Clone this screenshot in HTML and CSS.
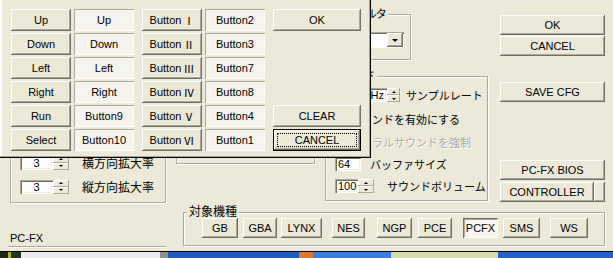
FILE: index.html
```html
<!DOCTYPE html>
<html lang="ja">
<head>
    <meta charset="UTF-8">
    <title>PC-FX 設定</title>
    <link rel="stylesheet" href="styles.css">
</head>
<body>
    <div class="screen">
        <div class="main">
            <div class="upper">
                <div class="col-a">
                    <fieldset class="group mag">
                        <div class="rows">
                            <div class="spin-row">
                                <span class="edit num">3</span>
                                <span class="spin"><i class="up"></i><i class="down"></i></span>
                                <span class="jp label">横方向拡大率</span>
                            </div>
                            <div class="spin-row">
                                <span class="edit num">3</span>
                                <span class="spin"><i class="up"></i><i class="down"></i></span>
                                <span class="jp label">縦方向拡大率</span>
                            </div>
                        </div>
                    </fieldset>
                </div>

                <div class="col-b">
                    <div class="panel"></div>
                </div>

                <div class="col-c">
                    <fieldset class="group filter">
                        <legend>フィルタ</legend>
                        <div class="combo"><span class="combo-text"></span><span class="drop"><b></b></span></div>
                    </fieldset>
                    <fieldset class="group sound">
                        <legend>サウンド</legend>
                        <div class="srow r1">
                            <span class="edit hz">44100Hz</span>
                            <span class="spin"><i class="up"></i><i class="down"></i></span>
                            <span class="label">サンプルレート</span>
                        </div>
                        <div class="srow r2">
                            <span class="check"></span>
                            <span class="label">サウンドを有効にする</span>
                        </div>
                        <div class="srow r3">
                            <span class="check"></span>
                            <span class="label disabled">モノラルサウンドを強制</span>
                        </div>
                        <div class="srow r4">
                            <span class="edit buf">64</span>
                            <span class="label">バッファサイズ</span>
                        </div>
                        <div class="srow r5">
                            <span class="edit vol">100</span>
                            <span class="spin"><i class="up"></i><i class="down"></i></span>
                            <span class="label">サウンドボリューム</span>
                        </div>
                    </fieldset>
                </div>

                <div class="col-d">
                    <button class="btn ok">OK</button>
                    <button class="btn cancel">CANCEL</button>
                    <button class="btn save">SAVE CFG</button>
                    <button class="btn bios">PC-FX BIOS</button>
                    <div class="ctrl-row">
                        <button class="btn ctrl">CONTROLLER</button>
                        <button class="btn ctrl-more"></button>
                    </div>
                </div>
            </div>

            <div class="lower">
                <div class="status">
                    <span>PC-FX</span>
                    <div class="etched"></div>
                </div>
                <fieldset class="group target">
                    <legend>対象機種</legend>
                    <div class="sys">
                        <button class="btn">GB</button>
                        <button class="btn">GBA</button>
                        <button class="btn">LYNX</button>
                        <button class="btn">NES</button>
                        <button class="btn">NGP</button>
                        <button class="btn">PCE</button>
                        <button class="btn checked">PCFX</button>
                        <button class="btn">SMS</button>
                        <button class="btn">WS</button>
                    </div>
                </fieldset>
            </div>

            <!-- key assignment window, opened over the settings dialog -->
            <div class="popup">
                <div class="pcol">
                    <button class="btn">Up</button>
                    <button class="btn">Down</button>
                    <button class="btn">Left</button>
                    <button class="btn">Right</button>
                    <button class="btn">Run</button>
                    <button class="btn">Select</button>
                </div>
                <div class="pcol">
                    <button class="btn flat">Up</button>
                    <button class="btn flat">Down</button>
                    <button class="btn flat">Left</button>
                    <button class="btn flat">Right</button>
                    <button class="btn flat">Button9</button>
                    <button class="btn flat">Button10</button>
                </div>
                <div class="pcol far">
                    <button class="btn">Button<span class="rn">Ⅰ</span></button>
                    <button class="btn">Button<span class="rn">Ⅱ</span></button>
                    <button class="btn">Button<span class="rn">Ⅲ</span></button>
                    <button class="btn">Button<span class="rn">Ⅳ</span></button>
                    <button class="btn">Button<span class="rn">Ⅴ</span></button>
                    <button class="btn">Button<span class="rn">Ⅵ</span></button>
                </div>
                <div class="pcol">
                    <button class="btn flat">Button2</button>
                    <button class="btn flat">Button3</button>
                    <button class="btn flat">Button7</button>
                    <button class="btn flat">Button8</button>
                    <button class="btn flat">Button4</button>
                    <button class="btn flat">Button1</button>
                </div>
                <div class="pcol far actions">
                    <button class="btn">OK</button>
                    <button class="btn clear">CLEAR</button>
                    <button class="btn default">CANCEL</button>
                </div>
            </div>
        </div>

        <div class="strip">
            <span class="s1"></span><span class="s2"></span><span class="s3"></span><span class="s4"></span>
            <span class="s5"></span><span class="s6"></span><span class="s7"></span><span class="s8"></span>
            <span class="s9"></span><span class="s10"></span>
        </div>
    </div>
</body>
</html>
```

FILE: styles.css
```css
body {
    margin: 0;
    background: #2060c8;
    font-family: "Liberation Sans", "Noto Sans CJK JP", sans-serif;
    font-size: 11px;
    color: #000;
}
.screen {
    width: 613px;
    height: 258px;
    overflow: hidden;
}
.main {
    position: relative;
    height: 251px;
    background: #ECE9D8;
    border-bottom: 1px solid #000;
}

/* classic 3d controls */
.btn {
    display: flex;
    align-items: center;
    justify-content: center;
    height: 22px;
    margin: 0;
    padding: 0;
    border: 0;
    background: #ECE9D8;
    font: inherit;
    color: #000;
    white-space: nowrap;
    box-shadow: inset -1px -1px #716F64, inset 1px 1px #fff, inset -2px -2px #ACA899;
}
.btn.flat {
    background: #F5F4EE;
    box-shadow: inset 1px 1px #ACA899, inset -1px -1px #fff;
}
.btn.checked {
    background: #F7F6F1;
    box-shadow: inset 1px 1px #716F64, inset -1px -1px #fff, inset 2px 2px #ACA899;
}
.btn.default {
    box-shadow: inset 0 0 0 1px #000, inset -2px -2px #716F64, inset 2px 2px #fff, inset -3px -3px #ACA899;
    outline: 1px dotted #000;
    outline-offset: -5px;
}
.rn {
    font-family: "Noto Sans CJK JP", sans-serif;
    font-size: 11px;
    margin-left: 2px;
}
.edit {
    display: block;
    box-sizing: border-box;
    height: 14px;
    line-height: 14px;
    background: #fff;
    box-shadow: inset 1px 1px #ACA899, inset 2px 2px #716F64, inset -1px -1px #fff, inset -2px -2px #F1EFE2;
}
.spin {
    display: flex;
    flex-direction: column;
    width: 16px;
    height: 14px;
}
.spin i {
    flex: 1;
    display: flex;
    align-items: center;
    justify-content: center;
    background: #ECE9D8;
    box-shadow: inset -1px -1px #ACA899, inset 1px 1px #fff;
}
.spin i::before {
    content: "";
    border-left: 2px solid transparent;
    border-right: 2px solid transparent;
}
.spin .up::before { border-bottom: 2px solid #000; }
.spin .down::before { border-top: 2px solid #000; }
.check {
    width: 13px;
    height: 13px;
    background: #fff;
    box-shadow: inset 1px 1px #ACA899, inset 2px 2px #716F64, inset -1px -1px #fff;
}

/* group boxes */
.group {
    margin: 0;
    padding: 0;
    min-inline-size: 0;
    box-sizing: border-box;
    border: 1px solid #ACA899;
    box-shadow: inset 1px 1px #fff, 1px 1px #fff;
}
.group legend {
    margin-left: 6px;
    padding: 0 2px;
    line-height: 13px;
    background: #ECE9D8;
}
.panel {
    height: 100px;
    border: 1px solid #ACA899;
    box-shadow: inset 1px 1px #fff, 1px 1px #fff;
}

.upper {
    display: flex;
    height: 203px;
}
.col-a {
    margin-left: 10px;
    width: 156px;
    display: flex;
    flex-direction: column;
    justify-content: flex-end;
}
.mag {
    height: 110px;
    padding: 0 0 7px 9px;
}
.mag .rows {
    display: flex;
    flex-direction: column;
    justify-content: flex-end;
    gap: 7px;
    height: 101px;
}
.spin-row {
    display: flex;
    align-items: center;
}
.mag .edit {
    width: 33px;
    text-align: center;
}
.jp {
    font-size: 12px;
}
.spin-row .label {
    margin-left: 13px;
}

.col-b {
    margin-left: 10px;
    width: 139px;
    display: flex;
    flex-direction: column;
    justify-content: flex-end;
    padding-bottom: 39px;
}

.col-c {
    margin-left: 10px;
    width: 163px;
    display: flex;
    flex-direction: column;
}
.filter {
    margin-top: 8px;
    width: 86px;
    padding: 11px 6px 11px 7px;
}
.filter legend {
    margin-left: 11px;
    letter-spacing: -1px;
}
.combo {
    display: flex;
    height: 16px;
    background: #fff;
    box-shadow: inset 1px 1px #ACA899, inset 2px 2px #716F64, inset -1px -1px #fff;
}
.combo-text {
    flex: 1;
}
.drop {
    display: flex;
    align-items: center;
    justify-content: center;
    width: 16px;
    margin: 1px 1px 1px 0;
    background: #ECE9D8;
    box-shadow: inset -1px -1px #716F64, inset 1px 1px #fff, inset -2px -2px #ACA899;
}
.drop b {
    border-left: 3px solid transparent;
    border-right: 3px solid transparent;
    border-top: 3px solid #000;
}
.sound {
    margin-top: 10px;
    width: 163px;
    height: 131px;
    padding: 0 0 3px 9px;
}
.sound legend {
    margin-left: -6px;
}
.srow {
    display: flex;
    align-items: center;
    height: 22px;
}
.srow.r1 { height: 24px; }
.srow.r2 { height: 24px; }
.edit.hz {
    width: 52px;
    padding-left: 5px;
}
.r1 .spin { width: 13px; }
.r1 .label { margin-left: 6px; }
.r2 .label, .r3 .label { margin-left: 2px; }
.disabled {
    color: #ACA899;
    text-shadow: 1px 1px #fff;
}
.edit.buf {
    width: 26px;
    padding-left: 3px;
}
.r4 .label { margin-left: 9px; }
.edit.vol {
    width: 23px;
    padding-left: 3px;
}
.r5 .label { margin-left: 13px; }

.col-d {
    margin-left: 12px;
    width: 105px;
    display: flex;
    flex-direction: column;
}
.col-d .btn { height: 20px; }
.col-d .ok { margin-top: 15px; }
.col-d .cancel { margin-top: 1px; }
.col-d .save { margin-top: 26px; }
.col-d .bios { margin-top: 58px; }
.ctrl-row {
    display: flex;
    margin-top: 2px;
}
.ctrl { width: 94px; }
.ctrl-more { width: 11px; }

.lower {
    display: flex;
    height: 48px;
}
.status {
    margin-left: 8px;
    width: 158px;
    padding-top: 29px;
    line-height: 12px;
}
.status span {
    padding-left: 2px;
}
.etched {
    margin-top: 2px;
    border-top: 1px solid #ACA899;
    border-bottom: 1px solid #fff;
}
.target {
    margin-left: 17px;
    margin-top: 3px;
    width: 422px;
    height: 40px;
    padding: 0 0 7px 18px;
}
.target legend {
    margin-left: -15px;
    font-size: 12px;
}
.sys {
    display: flex;
    margin-top: -1px;
}
.sys .btn { height: 20px; }
.sys .btn:nth-child(1) { width: 36px; }
.sys .btn:nth-child(2) { width: 34px; margin-left: 5px; }
.sys .btn:nth-child(3) { width: 41px; margin-left: 4px; }
.sys .btn:nth-child(4) { width: 33px; margin-left: 10px; }
.sys .btn:nth-child(5) { width: 35px; margin-left: 12px; }
.sys .btn:nth-child(6) { width: 34px; margin-left: 6px; }
.sys .btn:nth-child(7) { width: 35px; margin-left: 11px; }
.sys .btn:nth-child(8) { width: 37px; margin-left: 5px; }
.sys .btn:nth-child(9) { width: 38px; margin-left: 10px; }

/* popup window */
.popup {
    position: absolute;
    left: 0;
    top: 0;
    width: 371px;
    height: 158px;
    box-sizing: border-box;
    padding: 9px 0 0 11px;
    display: flex;
    align-items: flex-start;
    background: #ECE9D8;
    box-shadow: inset -1px -1px #000, inset -2px -2px #ACA899, inset 2px 0 #fff, inset 1px 0 #F1EFE2;
}
.pcol {
    display: flex;
    flex-direction: column;
    gap: 2px;
    width: 60px;
    height: 142px;
}
.pcol + .pcol { margin-left: 3px; }
.pcol.far { margin-left: 8px; }
.pcol.actions { width: 88px; }
.actions .clear { margin-top: auto; }

.strip {
    display: flex;
    height: 6px;
}
.strip span { height: 6px; }
.s1 { width: 8px; background: #1c2a14; }
.s2 { width: 3px; background: #b8b020; }
.s3 { width: 10px; background: #203818; }
.s4 { width: 139px; background: #ececec; }
.s5 { width: 8px; background: #909090; }
.s6 { width: 131px; background: #1f5cc4; }
.s7 { width: 14px; background: #e07a28; }
.s8 { width: 78px; background: #3b7fe0; }
.s9 { width: 107px; background: #d6dca8; }
.s10 { width: 115px; background: #2264cc; }
```
